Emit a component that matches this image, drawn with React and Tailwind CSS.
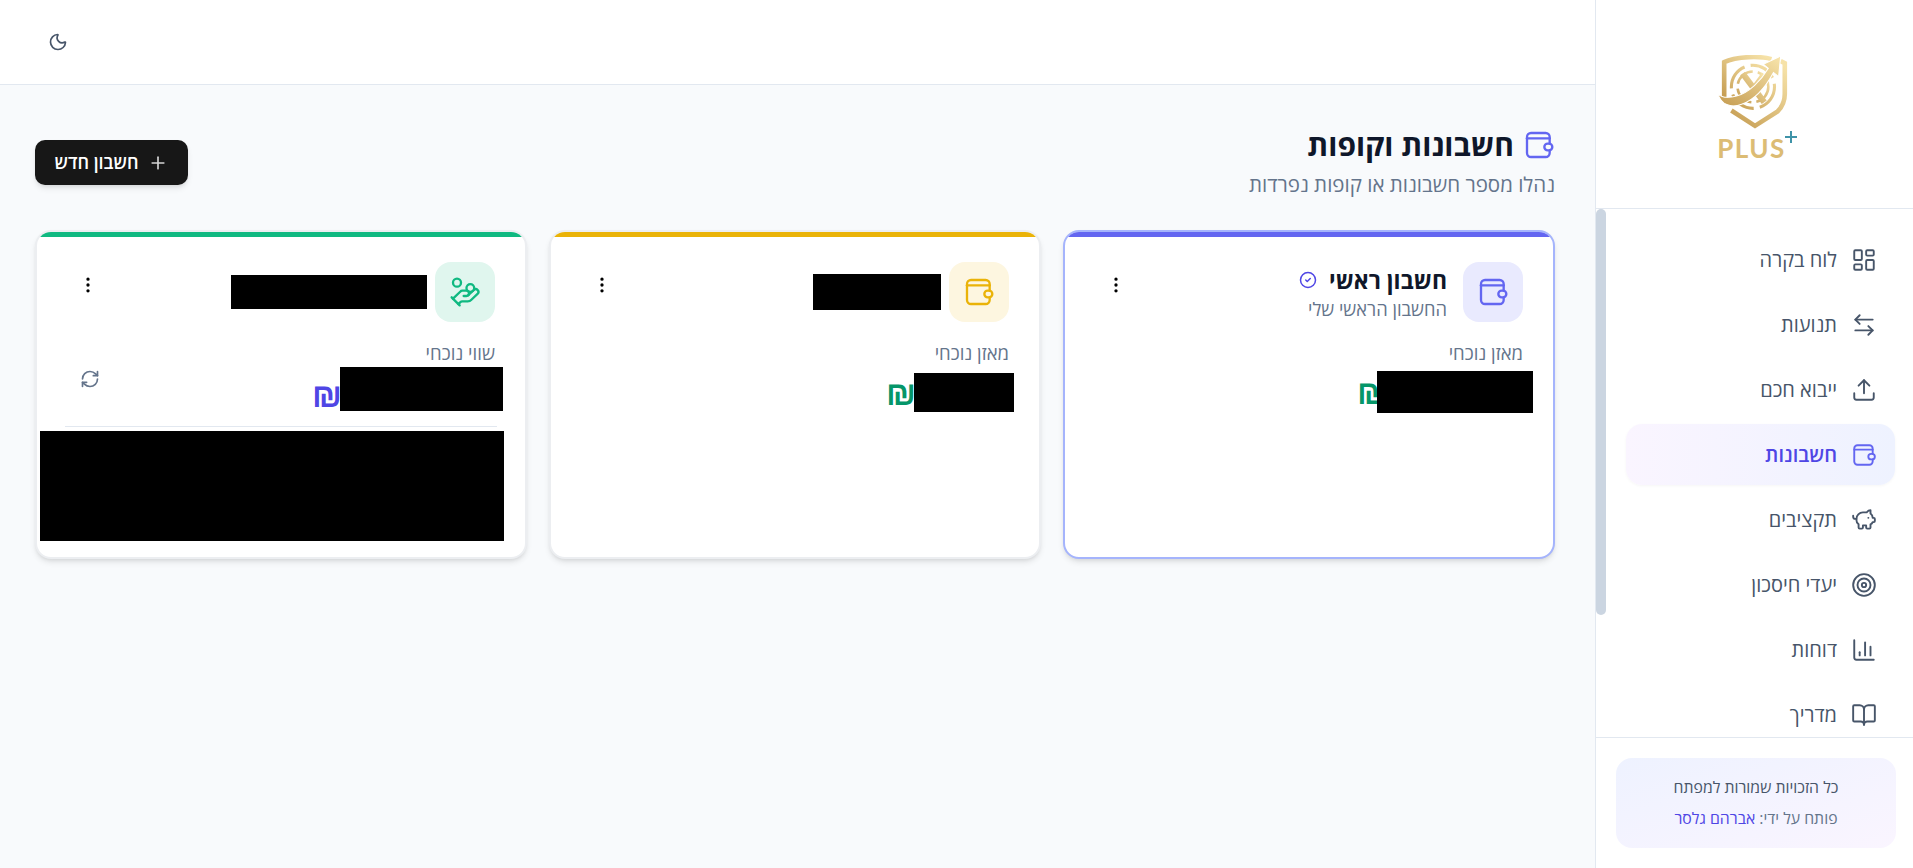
import React from 'react';
import {
  LayoutDashboard, ArrowLeftRight, Upload, PiggyBank, Target, ChartColumn, BookOpen,
  Moon, Plus, CircleCheck, EllipsisVertical, RefreshCw, HandCoins,
} from 'lucide-react';

// the wallet in the picture is a rounded box with a pill clasp, not the lucide one
const WalletIcon = ({ className, strokeWidth = 1.75 }) => (
  <svg viewBox="0 0 24 24" fill="none" stroke="currentColor" strokeWidth={strokeWidth} strokeLinecap="round" strokeLinejoin="round" className={className}>
    <path d="M20 11V6a3 3 0 0 0-3-3H6a3 3 0 0 0-3 3v12a3 3 0 0 0 3 3h11a3 3 0 0 0 3-3v-2" />
    <path d="M3 7h17" />
    <rect x="16" y="11" width="6" height="5" rx="2.5" />
  </svg>
);

const Logo = () => (
  <div className="flex flex-col items-center">
    <svg viewBox="0 0 72 74" className="w-[74px] h-[76px]" fill="none">
      <defs>
        <linearGradient id="gold" x1="0.9" y1="0" x2="0.1" y2="1">
          <stop offset="0" stopColor="#f6e2a8" />
          <stop offset="1" stopColor="#c79f55" />
        </linearGradient>
      </defs>
      <g stroke="url(#gold)">
        <path d="M52 4C42 1 18 1 6 7V42" strokeWidth="4.5" />
        <path d="M13 54L36 69L58 55C63 50 65 44 65 38V8L61 6" strokeWidth="4.5" />
        <circle cx="34" cy="31" r="21" strokeWidth="3" strokeDasharray="26 6" />
        <circle cx="34" cy="31" r="15" strokeWidth="2.5" strokeDasharray="20 5" />
        <path d="M24 18L45 46" strokeWidth="6" />
        <path d="M44 18L24 46" strokeWidth="3.5" />
      </g>
      <path
        d="M0 38C3 48 12 52 23 48C37 43 47 30 54 17L59 21L61 1L44 9L49 13C42 25 30 37 18 40C10 42 4 42 0 38Z"
        fill="url(#gold)"
        stroke="#ffffff"
        strokeWidth="1"
      />
    </svg>
    <div className="relative mt-[6px] mr-[6px] text-[26px] leading-[22px] font-bold tracking-[1.5px] text-[#dcbc74] font-['Lato',sans-serif]" dir="ltr">
      PLUS
      <svg viewBox="0 0 12 12" className="absolute -right-[11px] -top-[6px] w-[12px] h-[12px]">
        <path d="M6 0V12M0 6H12" stroke="#3f93a8" strokeWidth="2" />
      </svg>
    </div>
  </div>
);

const navItems = [
  { label: 'לוח בקרה', icon: LayoutDashboard },
  { label: 'תנועות', icon: ArrowLeftRight },
  { label: 'ייבוא חכם', icon: Upload },
  { label: 'חשבונות', icon: WalletIcon, active: true },
  { label: 'תקציבים', icon: PiggyBank },
  { label: 'יעדי חיסכון', icon: Target },
  { label: 'דוחות', icon: ChartColumn },
  { label: 'מדריך', icon: BookOpen },
];

const Sidebar = () => (
  <aside className="w-[318px] h-full shrink-0 flex flex-col bg-white border-l border-[#e2e8f0]">
    <div className="h-[209px] shrink-0 pt-[55px] border-b border-[#e2e8f0]">
      <Logo />
    </div>
    <div className="relative flex-1 min-h-0">
      <nav className="h-full overflow-hidden pt-[20px] pr-[18px] pl-[30px] flex flex-col gap-[4px]">
        {navItems.map(({ label, icon: Icon, active }) => (
          <div
            key={label}
            className={`h-[61px] shrink-0 flex items-center gap-[14px] px-[18px] rounded-2xl text-[20px] ${
              active
                ? 'bg-linear-to-l from-[#eef2ff] to-[#faf5ff] text-[#4f46e5] font-semibold shadow-[0_1px_3px_rgba(0,0,0,0.04)]'
                : 'text-[#475569] font-medium'
            }`}
          >
            <Icon strokeWidth={1.75} className={`w-[26px] h-[26px] shrink-0 ${active ? 'text-[#6366f1]' : 'text-[#475569]'}`} />
            <span>{label}</span>
          </div>
        ))}
      </nav>
      {/* scrollbar thumb, headless browser hides the native one */}
      <div className="absolute left-0 top-0 w-[10px] h-[406px] rounded-[10px] bg-[#cbd5e1]" />
    </div>
    <div className="h-[131px] shrink-0 border-t border-[#e2e8f0] pt-[20px] pr-[17px] pl-[20px]">
      <div className="h-[90px] rounded-2xl bg-linear-to-br from-[#eef2ff] to-[#faf5ff] flex flex-col items-center justify-center gap-[10px] text-[15.8px] leading-[21px]">
        <p className="text-[#475569]">כל הזכויות שמורות למפתח</p>
        <p className="text-[#64748b]">
          פותח על ידי: <span className="text-[#4f46e5] font-medium">אברהם גלסר</span>
        </p>
      </div>
    </div>
  </aside>
);

const Redacted = ({ className }) => <div className={`bg-black relative ${className}`} />;

const Shekel = ({ className }) => (
  <span className={`text-[34px] leading-none font-bold font-['Liberation_Sans',sans-serif] ${className}`}>₪</span>
);

const AccountCard = ({ band, border, iconBox, icon: Icon, iconColor, titleBlock, label, children, action }) => (
  <div className={`bg-white rounded-2xl overflow-hidden shadow-md border-2 ${border}`}>
    <div className={`h-[5px] ${band}`} />
    <div className="pt-[25px] px-[30px]">
      <div className="flex items-start gap-[16px]">
        <div className={`w-[60px] h-[60px] shrink-0 rounded-2xl flex items-center justify-center ${iconBox}`}>
          <Icon strokeWidth={1.75} className={`w-8 h-8 ${iconColor}`} />
        </div>
        <div className="flex-1 min-w-0">{titleBlock}</div>
        <button className="py-[13px] pl-[11px] pr-[15px] text-black">
          <EllipsisVertical className="w-5 h-5" />
        </button>
      </div>
      <div className="mt-[19px] flex justify-between items-start">
        <div className="flex-1 min-w-0">
          <p className="text-[18.5px] leading-[24px] text-[#64748b]">{label}</p>
          {children}
        </div>
        {action}
      </div>
    </div>
  </div>
);

export default function App() {
  return (
    <div dir="rtl" className="h-[868px] w-full flex overflow-hidden bg-[#f8fafc] font-['Open_Sans',sans-serif]">
      <Sidebar />
      <div className="flex-1 min-w-0 flex flex-col">
        <header className="h-[85px] shrink-0 bg-white border-b border-[#e2e8f0] flex items-center pl-[48px]">
          <Moon className="w-5 h-5 mr-auto text-[#475569]" />
        </header>
        <main className="flex-1 pt-[40px] pr-[40px] pl-[35px]">
          <div className="flex items-start justify-between">
            <div>
              <div className="flex items-center gap-[9px]">
                <WalletIcon className="w-8 h-8 text-[#6366f1]" />
                <h1 className="text-[30px] leading-[40px] font-bold text-[#0f172a]">חשבונות וקופות</h1>
              </div>
              <p className="mt-[5px] text-[20.5px] leading-[28px] text-[#64748b]">נהלו מספר חשבונות או קופות נפרדות</p>
            </div>
            <button className="mt-[15px] h-[45px] w-[153px] rounded-[10px] bg-[#171717] text-white text-[18px] font-semibold flex items-center justify-center gap-[10px] shadow-md">
              <Plus className="w-5 h-5 text-[#d4d4d4]" />
              <span>חשבון חדש</span>
            </button>
          </div>

          <div className="mt-[32px] grid grid-cols-3 gap-[22px] h-[329px]">
            <AccountCard
              band="bg-[#6366f1]"
              border="border-[#a5b4fc]"
              iconBox="bg-[#e9eafe]"
              icon={WalletIcon}
              iconColor="text-[#6366f1]"
              label="מאזן נוכחי"
              titleBlock={
                <div className="mt-[3px]">
                  <div className="flex items-center gap-[12px]">
                    <h3 className="text-[23px] leading-[30px] font-bold text-[#0f172a]">חשבון ראשי</h3>
                    <CircleCheck className="w-[18px] h-[18px] text-[#4f46e5]" />
                  </div>
                  <p className="text-[18.3px] leading-[24px] text-[#64748b] mt-[2px]">החשבון הראשי שלי</p>
                </div>
              }
            >
              <div className="-mr-[10px] flex items-center h-[42px] mt-[6px]">
                <Redacted className="w-[156px] h-[42px] z-10" />
                <Shekel className="text-[#059669] -mr-[10px]" />
              </div>
            </AccountCard>

            <AccountCard
              band="bg-[#eab308]"
              border="border-[#eceef1]"
              iconBox="bg-[#fdf6e0]"
              icon={WalletIcon}
              iconColor="text-[#eab308]"
              label="מאזן נוכחי"
              titleBlock={<Redacted className="w-[128px] h-[36px] mt-[12px] -mr-[8px]" />}
            >
              <div className="-mr-[5px] flex items-center h-[39px] mt-[8px]">
                <Redacted className="w-[100px] h-[39px] z-10" />
                <Shekel className="text-[#059669] -mr-[2px]" />
              </div>
            </AccountCard>

            <div className="relative">
              <AccountCard
                band="bg-[#10b981]"
                border="border-[#eceef1] h-full"
                iconBox="bg-[#e0f6ee]"
                icon={HandCoins}
                iconColor="text-[#10b981]"
                label="שווי נוכחי"
                titleBlock={<Redacted className="w-[196px] h-[34px] mt-[13px] -mr-[8px]" />}
                action={<RefreshCw className="w-5 h-5 ml-[13px] mt-[28px] text-[#64748b]" />}
              >
                <div className="-mr-[8px] flex items-center h-[44px] mt-[2px]">
                  <Redacted className="w-[163px] h-[44px] z-10" />
                  <Shekel className="text-[#4f46e5] -mr-[2px] mt-[12px]" />
                </div>
              </AccountCard>
              <div className="absolute top-[196px] left-[30px] right-[30px] h-px bg-[#e2e8f0]" />
              <Redacted className="absolute! top-[201px] left-[5px] right-[23px] h-[110px]" />
            </div>
          </div>
        </main>
      </div>
    </div>
  );
}
